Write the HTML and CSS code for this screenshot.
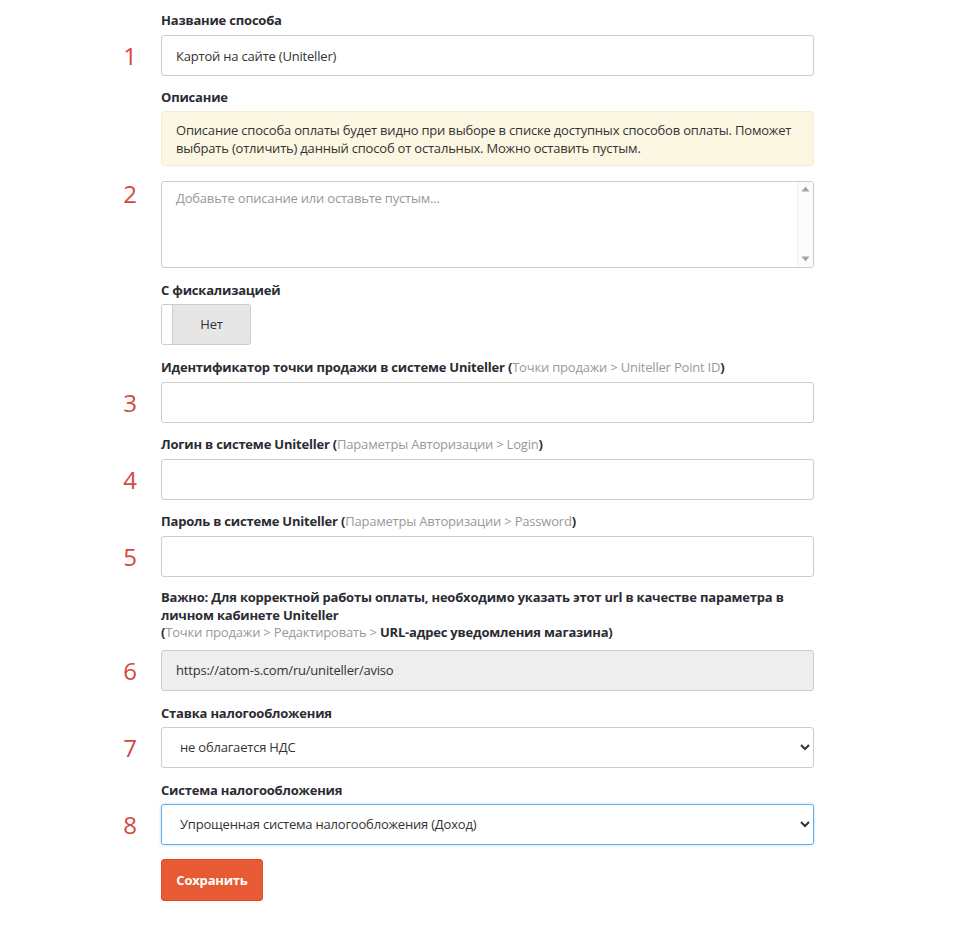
FILE: index.html
```html
<!DOCTYPE html>
<html lang="ru">
<head>
<meta charset="utf-8">
<title>Uniteller</title>
<link rel="stylesheet" href="styles.css">
</head>
<body>
<form class="form">
  <div class="label">Название способа</div>
  <div class="num">1</div>
  <input class="control" type="text" value="Картой на сайте (Uniteller)">

  <div class="label label-tight">Описание</div>
  <div class="note">Описание способа оплаты будет видно при выборе в списке доступных способов оплаты. Поможет выбрать (отличить) данный способ от остальных. Можно оставить пустым.</div>
  <div class="num num-top">2</div>
  <div class="area-wrap">
    <textarea class="control area" placeholder="Добавьте описание или оставьте пустым..."></textarea>
    <div class="fake-scroll" aria-hidden="true">
      <svg class="arrow" width="9" height="6" viewBox="0 0 9 6"><path d="M4.5 0.5 L8.5 5.5 L0.5 5.5 Z" fill="#a3a3a3"/></svg>
      <svg class="arrow" width="9" height="6" viewBox="0 0 9 6"><path d="M4.5 5.5 L8.5 0.5 L0.5 0.5 Z" fill="#a3a3a3"/></svg>
    </div>
  </div>

  <div class="label label-tight">С фискализацией</div>
  <div class="toggle-cell">
    <div class="toggle"><span class="knob"></span><span class="toggle-text">Нет</span></div>
  </div>

  <div class="label">Идентификатор точки продажи в системе Uniteller <span class="hint-wrap">(<span class="hint">Точки продажи &gt; Uniteller Point ID</span>)</span></div>
  <div class="num">3</div>
  <input class="control" type="text">

  <div class="label">Логин в системе Uniteller <span class="hint-wrap">(<span class="hint">Параметры Авторизации &gt; Login</span>)</span></div>
  <div class="num">4</div>
  <input class="control" type="text">

  <div class="label">Пароль в системе Uniteller <span class="hint-wrap">(<span class="hint">Параметры Авторизации &gt; Password</span>)</span></div>
  <div class="num">5</div>
  <input class="control" type="text">

  <div class="label label-long">Важно: Для корректной работы оплаты, необходимо указать этот url в качестве параметра в личном кабинете Uniteller<br>(<span class="hint">Точки продажи &gt; Редактировать &gt; </span>URL-адрес уведомления магазина)</div>
  <div class="num">6</div>
  <input class="control readonly" type="text" value="https://atom-s.com/ru/uniteller/aviso" readonly>

  <div class="label label-sel">Ставка налогообложения</div>
  <div class="num">7</div>
  <select class="control select">
    <option>не облагается НДС</option>
  </select>

  <div class="label label-sel">Система налогообложения</div>
  <div class="num">8</div>
  <select class="control select focus">
    <option>Упрощенная система налогообложения (Доход)</option>
  </select>

  <div class="btn-cell"><button type="button" class="btn">Сохранить</button></div>
</form>
</body>
</html>
```

FILE: styles.css
```css
* { box-sizing: border-box; }

html, body {
  margin: 0;
  padding: 0;
  background: #fff;
}

body {
  font-family: "Open Sans", "Liberation Sans", sans-serif;
  font-size: 13px;
  letter-spacing: -0.2px;
  color: #333;
}

.form {
  display: grid;
  grid-template-columns: 40px 653px;
  column-gap: 11px;
  padding: 11px 0 0 110px;
  align-items: start;
}

.label {
  grid-column: 2;
  font-weight: 700;
  line-height: 18px;
  color: #2b2b33;
  margin-bottom: 6px;
}

.label-tight { margin-bottom: 5px; }
.label-sel { margin-bottom: 5px; }
.label-long { margin-bottom: 8px; line-height: 17.5px; }

.hint-wrap { font-weight: 700; }
.hint { color: #999; font-weight: 400; }

.num {
  grid-column: 1;
  color: #d6473c;
  font-size: 24px;
  letter-spacing: 0;
  line-height: 41px;
  text-align: center;
  font-weight: 400;
}

.num-top {
  line-height: 26px;
}

.control {
  grid-column: 2;
  display: block;
  width: 653px;
  height: 41px;
  margin: 0 0 12px;
  padding: 0 14px;
  border: 1px solid #ccc;
  border-radius: 3px;
  background: #fff;
  font-family: "Open Sans", "Liberation Sans", sans-serif;
  font-size: 13px;
  letter-spacing: -0.2px;
  color: #333;
  outline: none;
}

.area-wrap {
  grid-column: 2;
  position: relative;
  margin-bottom: 13px;
}

.area {
  height: 87px;
  padding: 7px 30px 7px 14px;
  resize: none;
  margin: 0;
}

.area::placeholder { color: #999; }

.fake-scroll {
  position: absolute;
  top: 1px;
  right: 1px;
  bottom: 1px;
  width: 16px;
  background: #fbfbfb;
  border-left: 1px solid #f0f0f0;
  display: flex;
  flex-direction: column;
  justify-content: space-between;
  align-items: center;
  padding: 4px 0 5px;
  border-radius: 0 2px 2px 0;
}

.arrow { display: block; }

.readonly {
  background: #eee;
  margin-bottom: 13px;
}

.select {
  padding: 0 14px;
  margin-bottom: 13px;
}

.focus {
  border-color: #66afe9;
  box-shadow: 0 0 3px rgba(102, 175, 233, 0.5);
  margin-bottom: 14px;
}

.note {
  grid-column: 2;
  background: #fcf7e3;
  border: 1px solid #f7ecd0;
  border-radius: 3px;
  padding: 9px 14px 8px;
  line-height: 18px;
  margin-bottom: 15px;
}

.toggle-cell {
  grid-column: 2;
  margin-bottom: 13px;
}

.toggle {
  display: flex;
  width: 90px;
  height: 41px;
  border: 1px solid #ccc;
  border-radius: 3px;
  overflow: hidden;
  background: #e6e6e6;
}

.knob {
  width: 11px;
  background: #fff;
  border-right: 1px solid #ccc;
}

.toggle-text {
  flex: 1;
  display: flex;
  align-items: center;
  justify-content: center;
  padding-bottom: 2px;
  color: #333;
}

.btn-cell {
  grid-column: 2;
}

.btn {
  width: 102px;
  height: 42px;
  border: 1px solid #d94f2a;
  border-radius: 3px;
  background: #e85a33;
  color: #fff;
  font-family: "Open Sans", "Liberation Sans", sans-serif;
  font-size: 13px;
  letter-spacing: -0.2px;
  font-weight: 700;
  cursor: pointer;
}
```
